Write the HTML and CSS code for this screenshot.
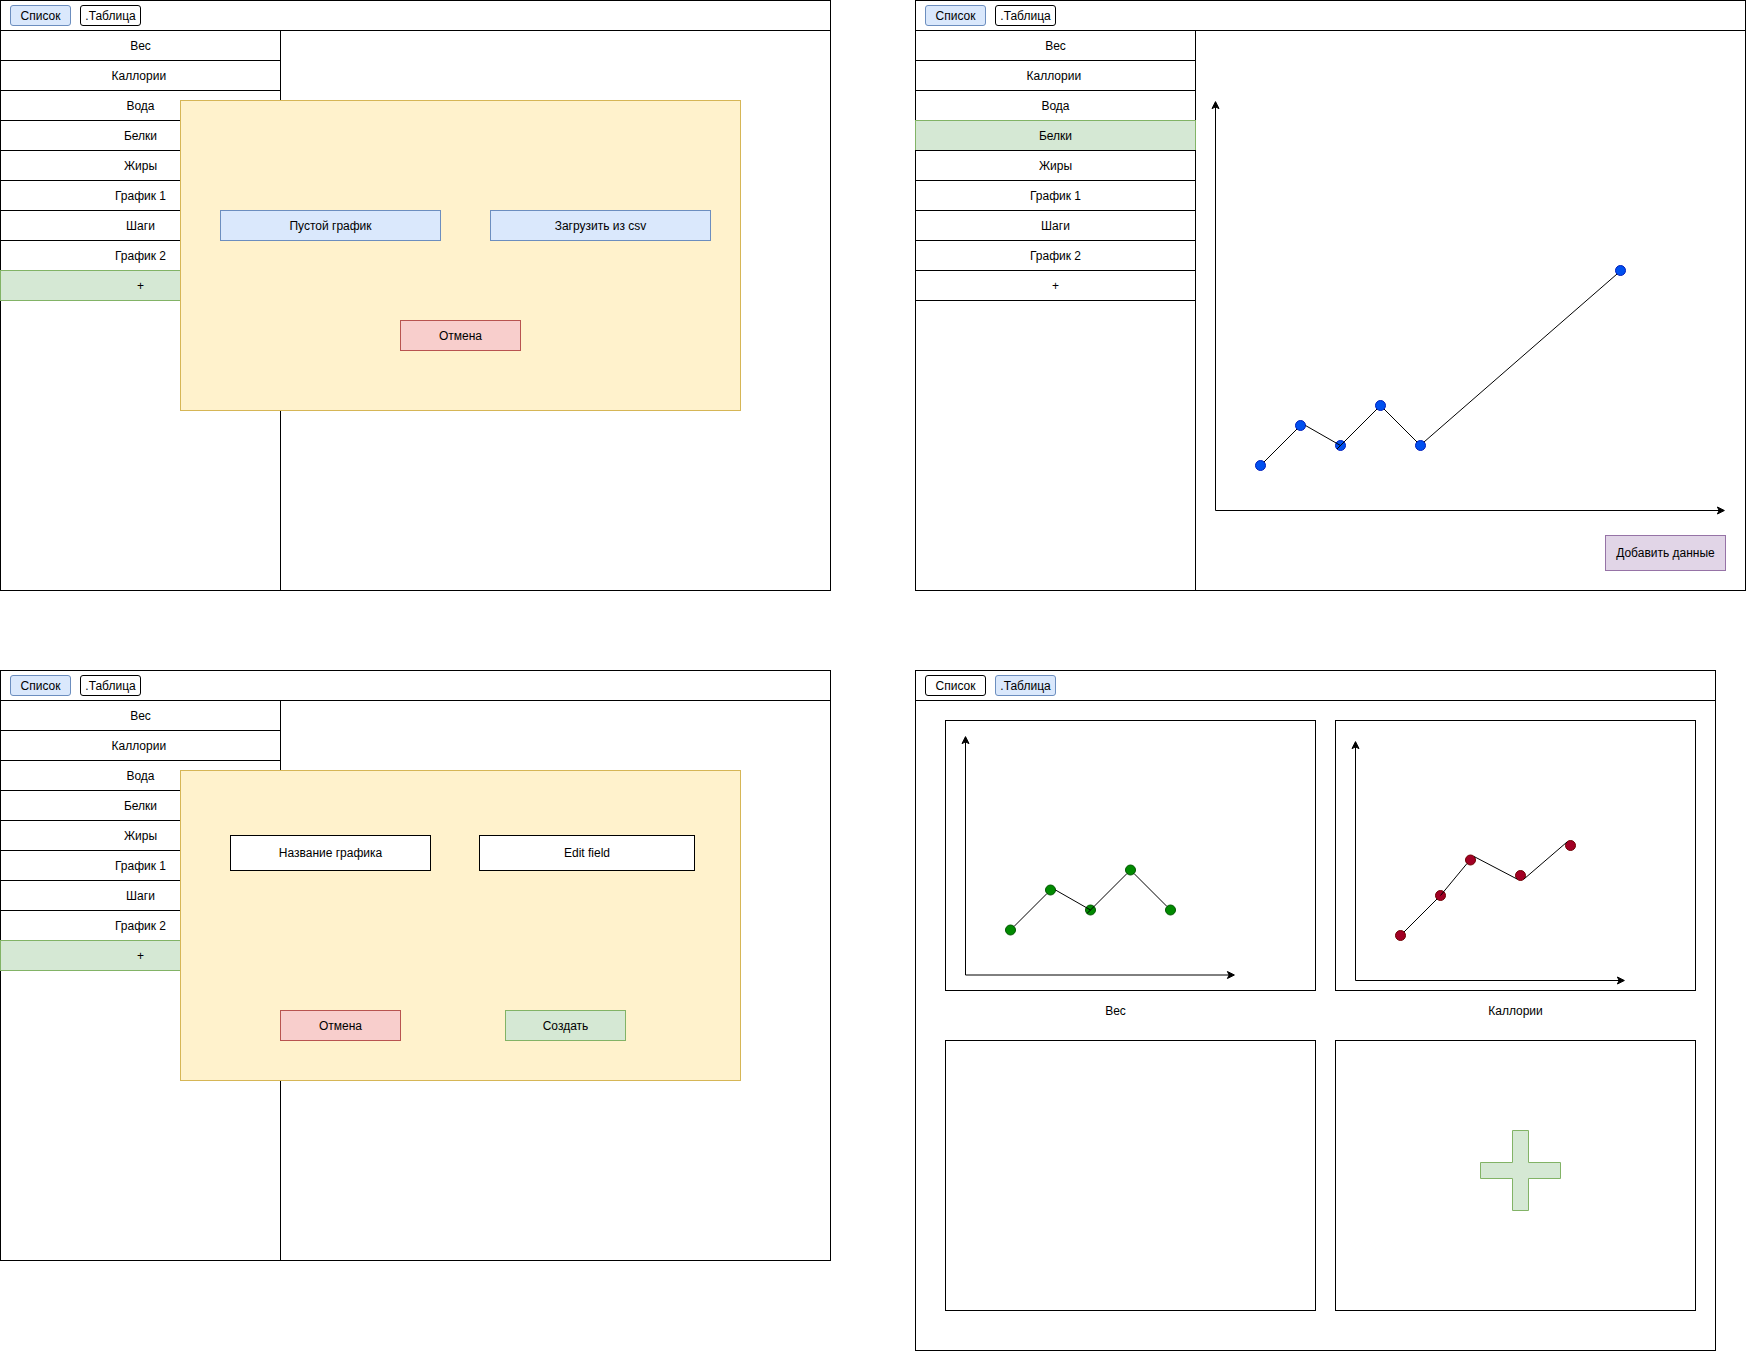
FILE: index.html
```html
<!DOCTYPE html>
<html lang="ru">
<head>
<meta charset="utf-8">
<title>Графики</title>
<link rel="stylesheet" href="styles.css">
</head>
<body>
<main class="board">

  <section class="frame">
    <header class="tabs">
      <button class="tab tab-active" type="button">Список</button>
      <button class="tab" type="button">.Таблица</button>
    </header>
    <div class="content">
      <nav class="sidebar">
        <button class="item" type="button">Вес</button>
        <button class="item" type="button">Каллории&nbsp;</button>
        <button class="item" type="button">Вода</button>
        <button class="item" type="button">Белки</button>
        <button class="item" type="button">Жиры</button>
        <button class="item" type="button">График 1</button>
        <button class="item" type="button">Шаги</button>
        <button class="item" type="button">График 2</button>
        <button class="item item-active" type="button">+</button>
      </nav>
    </div>
    <div class="dialog dialog-source" role="dialog" aria-label="Новый график">
      <div class="choices">
        <button class="button blue" type="button">Пустой график</button>
        <button class="button blue" type="button">Загрузить из csv</button>
      </div>
      <div class="actions actions-center">
        <button class="button red" type="button">Отмена</button>
      </div>
    </div>
  </section>

  <section class="frame">
    <header class="tabs">
      <button class="tab tab-active" type="button">Список</button>
      <button class="tab" type="button">.Таблица</button>
    </header>
    <div class="content">
      <nav class="sidebar">
        <button class="item" type="button">Вес</button>
        <button class="item" type="button">Каллории&nbsp;</button>
        <button class="item" type="button">Вода</button>
        <button class="item item-active" type="button">Белки</button>
        <button class="item" type="button">Жиры</button>
        <button class="item" type="button">График 1</button>
        <button class="item" type="button">Шаги</button>
        <button class="item" type="button">График 2</button>
        <button class="item" type="button">+</button>
      </nav>
      <div class="details">
        <svg class="chart" viewBox="0 0 549 504" role="img" aria-label="Белки">
          <path class="axis" d="M19.5 479.5V75.87M19.5 479.5H523.13"/>
          <path class="arrow" d="M19.5 70.62l3.5 7-3.5-1.75-3.5 1.75zM528.38 479.5l-7 3.5 1.75-3.5-1.75-3.5z"/>
          <g class="points points-blue">
            <circle cx="64.5" cy="434.5" r="5"/>
            <circle cx="104.5" cy="394.5" r="5"/>
            <circle cx="144.5" cy="414.5" r="5"/>
            <circle cx="184.5" cy="374.5" r="5"/>
            <circle cx="224.5" cy="414.5" r="5"/>
            <circle cx="424.5" cy="239.5" r="5"/>
          </g>
          <path class="line" d="M68 431L101 398M109.500 394.500L144.500 414.500M141 418L181 378M188 378L221 411M228 411L421 243"/>
        </svg>
        <button class="button purple add-data" type="button">Добавить данные</button>
      </div>
    </div>
  </section>

  <section class="frame">
    <header class="tabs">
      <button class="tab tab-active" type="button">Список</button>
      <button class="tab" type="button">.Таблица</button>
    </header>
    <div class="content">
      <nav class="sidebar">
        <button class="item" type="button">Вес</button>
        <button class="item" type="button">Каллории&nbsp;</button>
        <button class="item" type="button">Вода</button>
        <button class="item" type="button">Белки</button>
        <button class="item" type="button">Жиры</button>
        <button class="item" type="button">График 1</button>
        <button class="item" type="button">Шаги</button>
        <button class="item" type="button">График 2</button>
        <button class="item item-active" type="button">+</button>
      </nav>
    </div>
    <form class="dialog dialog-name" aria-label="Название графика">
      <div class="fields">
        <label class="field" for="chart-name">Название графика</label>
        <input class="field" id="chart-name" type="text" value="Edit field">
      </div>
      <div class="actions actions-pair">
        <button class="button red" type="button">Отмена</button>
        <button class="button green" type="button">Создать</button>
      </div>
    </form>
  </section>

  <section class="frame frame-table">
    <header class="tabs">
      <button class="tab" type="button">Список</button>
      <button class="tab tab-active" type="button">.Таблица</button>
    </header>
    <div class="cards">
      <figure class="cell">
        <div class="card">
          <svg class="chart" viewBox="0 0 369 269" role="img" aria-label="Вес">
            <path class="axis" d="M19.5 254V20.87M19.5 254H283.13"/>
            <path class="arrow" d="M19.5 15.62l3.5 7-3.5-1.75-3.5 1.75zM288.38 254l-7 3.5 1.75-3.5-1.75-3.5z"/>
            <g class="points points-green">
              <circle cx="64.5" cy="209" r="5"/>
              <circle cx="104.5" cy="169" r="5"/>
              <circle cx="144.5" cy="189" r="5"/>
              <circle cx="184.5" cy="149" r="5"/>
              <circle cx="224.5" cy="189" r="5"/>
            </g>
            <path class="line" d="M68 205.500L101 172.500M109.500 169L144.500 189M141 192.500L181 152.500M188 152.500L221 185.500"/>
          </svg>
        </div>
        <figcaption class="caption caption-left">Вес</figcaption>
      </figure>
      <figure class="cell">
        <div class="card">
          <svg class="chart" viewBox="0 0 359 269" role="img" aria-label="Каллории">
            <path class="axis" d="M19.5 259.5V25.87M19.5 259.5H283.13"/>
            <path class="arrow" d="M19.5 20.62l3.5 7-3.5-1.75-3.5 1.75zM288.38 259.5l-7 3.5 1.75-3.5-1.75-3.5z"/>
            <g class="points points-red">
              <circle cx="64.5" cy="214.5" r="5"/>
              <circle cx="104.5" cy="174.5" r="5"/>
              <circle cx="134.5" cy="139" r="5"/>
              <circle cx="184.5" cy="154.5" r="5"/>
              <circle cx="234.5" cy="124.5" r="5"/>
            </g>
            <path class="line" d="M68 211L101 178M104.500 174.500L131 142.500M138 135.500L181 158M188 158L231 121"/>
          </svg>
        </div>
        <figcaption class="caption">Каллории</figcaption>
      </figure>
      <div class="card"></div>
      <button class="card card-add" type="button" aria-label="Добавить график">
        <svg class="chart" viewBox="0 0 359 269" aria-hidden="true">
          <path class="plus" d="M176.500 89.500h16v32h32v16h-32v32h-16v-32h-32v-16h32z"/>
        </svg>
      </button>
    </div>
  </section>

</main>
</body>
</html>
```
FILE: styles.css
```css
* {
  box-sizing: border-box;
}

body {
  margin: 0;
  background: #fff;
  color: #000;
  font: 12px/14px "Liberation Sans", Arial, sans-serif;
}

button,
input {
  margin: 0;
  padding: 0;
  border: 1px solid #000;
  border-radius: 0;
  background: #fff;
  color: inherit;
  font: inherit;
  text-align: center;
}

/* Four application screens, two to a row */
.board {
  display: grid;
  grid-template-columns: 1fr 1fr;
  gap: 79px 84px;
  align-items: start;
}

.frame {
  position: relative;
  border: 1px solid #000;
}

.frame-table {
  margin-right: 30px;
}

.tabs {
  display: flex;
  gap: 9px;
  padding: 4px 9px;
  border-bottom: 1px solid #000;
}

.tab {
  width: 61px;
  height: 21px;
  border-radius: 3px;
}

.tab-active {
  border-color: #6c8ebf;
  background: #dae8fc;
}

.content {
  display: flex;
  min-height: 559px;
}

.sidebar {
  display: flex;
  flex: none;
  flex-direction: column;
  width: 280px;
  border-right: 1px solid #000;
}

/* Neighbouring rows share one border line */
.item {
  height: 31px;
  margin: -1px -1px 0;
}

.item-active {
  border-color: #82b366;
  background: #d5e8d4;
}

.details {
  display: flex;
  flex: 1;
  flex-direction: column;
}

.button {
  height: 31px;
}

.blue {
  border-color: #6c8ebf;
  background: #dae8fc;
}

.red {
  border-color: #b85450;
  background: #f8cecc;
}

.green {
  border-color: #82b366;
  background: #d5e8d4;
}

.purple {
  border-color: #9673a6;
  background: #e1d5e7;
}

.add-data {
  align-self: flex-end;
  width: 121px;
  height: 36px;
  margin: 0 19px 19px;
}

/* Dialogs lie over the screen */
.dialog {
  position: absolute;
  top: 99px;
  left: 179px;
  width: 561px;
  height: 311px;
  border: 1px solid #d6b656;
  background: #fff2cc;
}

.dialog-source {
  padding-top: 109px;
}

.dialog-name {
  padding-top: 64px;
}

.choices {
  display: grid;
  grid-template-columns: 1fr 1fr;
  gap: 49px;
  padding: 0 29px 0 39px;
}

.fields {
  display: grid;
  grid-template-columns: 201px 216px;
  gap: 48px;
  padding-left: 49px;
}

.field {
  width: 100%;
  height: 36px;
  border: 1px solid #000;
  background: #fff;
  line-height: 34px;
  text-align: center;
}

.actions {
  display: flex;
}

.actions .button {
  width: 121px;
}

.actions-center {
  justify-content: center;
  margin-top: 79px;
}

.actions-pair {
  gap: 104px;
  margin-top: 139px;
  padding-left: 99px;
}

.cards {
  display: grid;
  grid-template-columns: 371fr 361fr;
  gap: 9px 19px;
  padding: 19px 19px 39px 29px;
}

.cell {
  margin: 0;
}

.card {
  min-height: 271px;
  border: 1px solid #000;
}

.card-add {
  display: block;
  width: 100%;
}

.caption {
  line-height: 40px;
  text-align: center;
}

.caption-left {
  padding-right: 30px;
}

.chart {
  display: block;
  width: 100%;
  height: auto;
}

.axis,
.line {
  fill: none;
  stroke: #000;
}

.arrow {
  fill: #000;
  stroke: #000;
}

.points-blue {
  fill: #0050ef;
  stroke: #001dbc;
}

.points-green {
  fill: #008a00;
  stroke: #005700;
}

.points-red {
  fill: #a20025;
  stroke: #6f0000;
}

.plus {
  fill: #d5e8d4;
  stroke: #82b366;
}
```
